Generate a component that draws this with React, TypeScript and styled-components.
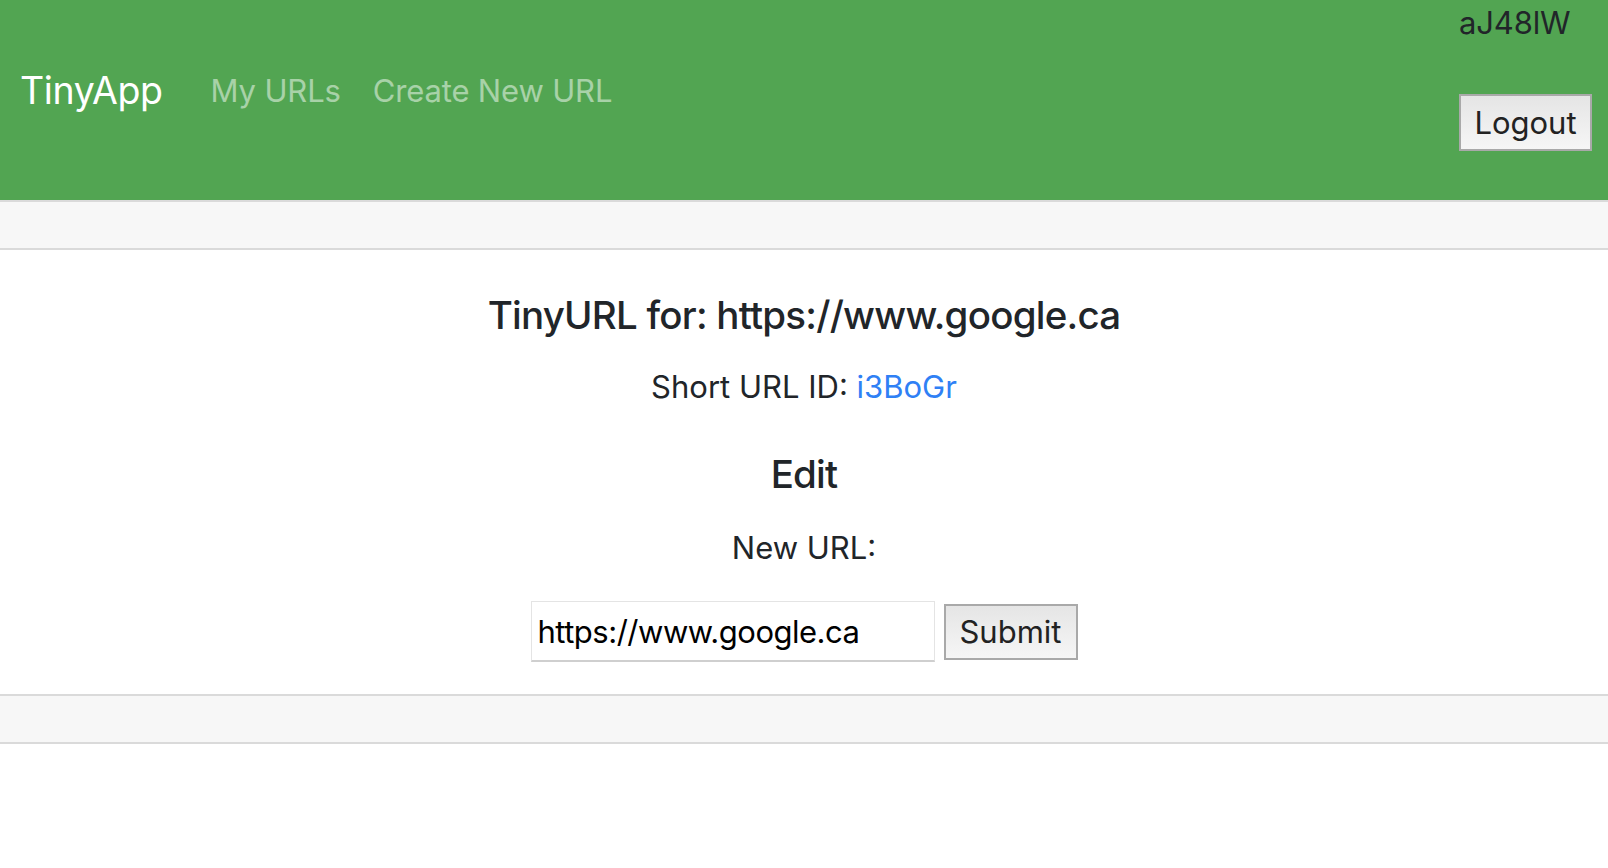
import React from "react";
import styled, { createGlobalStyle } from "styled-components";

const FONT = `Inter, "Liberation Sans", Arial, sans-serif`;

const GlobalStyle = createGlobalStyle`
  html, body { margin: 0; padding: 0; background: #ffffff; }
  body {
    font-family: ${FONT};
    color: #212529;
  }
  * { box-sizing: border-box; }
`;

const Navbar = styled.nav`
  display: flex;
  justify-content: space-between;
  align-items: flex-start;
  height: 200px;
  background: #52a552;
  padding: 0 16px 0 20px;
`;

const NavLeft = styled.div`
  display: flex;
  align-items: center;
  height: 182px;
`;

const Brand = styled.a`
  font-size: 37.5px;
  line-height: 60px;
  letter-spacing: -0.01em;
  color: #ffffff;
  margin-right: 32px;
  text-decoration: none;
`;

const NavLink = styled.a`
  font-size: 31px;
  line-height: 48px;
  letter-spacing: -0.005em;
  padding: 0 16px;
  color: rgba(255, 255, 255, 0.5);
  text-decoration: none;
`;

const NavRight = styled.div`
  display: flex;
  flex-direction: column;
  align-items: flex-start;
`;

const UserId = styled.div`
  font-size: 31px;
  line-height: 46px;
  letter-spacing: -0.005em;
  color: #212529;
`;

const GrayButton = styled.button<{ $w: number; $h: number }>`
  width: ${(p) => p.$w}px;
  height: ${(p) => p.$h}px;
  padding: 0;
  font-family: ${FONT};
  font-size: 31px;
  color: #222;
  background: linear-gradient(#e5e5e5, #f6f6f6);
  border: 2px solid #a9a9a9;
  border-radius: 0;
`;

const LogoutButton = styled(GrayButton)`
  margin-top: 48px;
`;

const Card = styled.section`
  border-top: 2px solid #dadada;
  border-bottom: 2px solid #dadada;
`;

const CardBand = styled.div<{ $top?: boolean }>`
  height: 48px;
  background: #f7f7f7;
  ${(p) =>
    p.$top ? "border-bottom: 2px solid #dadada;" : "border-top: 2px solid #dadada;"}
`;

const CardBody = styled.div`
  padding: 41px 20px 32px;
  display: flex;
  flex-direction: column;
  align-items: center;
  text-align: center;
`;

const Heading = styled.h5<{ $mb: number }>`
  font-size: 38.5px;
  line-height: 48px;
  font-weight: 500;
  letter-spacing: -0.02em;
  margin: 0 0 ${(p) => p.$mb}px;
  color: #212529;
`;

const Para = styled.p<{ $mb: number }>`
  font-size: 31px;
  line-height: 48px;
  margin: 0 0 ${(p) => p.$mb}px;
  color: #212529;
`;

const IdLink = styled.a`
  color: #2f80f5;
  text-decoration: none;
`;

const FormRow = styled.form`
  display: flex;
  align-items: center;
  gap: 9px;
`;

const UrlInput = styled.input`
  width: 404px;
  height: 61px;
  padding: 0 6px;
  font-family: ${FONT};
  font-size: 31px;
  letter-spacing: -0.016em;
  color: #000;
  border: 1px solid #e4e4e4;
  border-bottom: 2px solid #cfcfcf;
  border-radius: 0;
  outline: none;
`;

export default function App() {
  return (
    <>
      <GlobalStyle />
      <Navbar>
        <NavLeft>
          <Brand href="#">TinyApp</Brand>
          <NavLink href="#">My URLs</NavLink>
          <NavLink href="#">Create New URL</NavLink>
        </NavLeft>
        <NavRight>
          <UserId>aJ48lW</UserId>
          <LogoutButton type="button" $w={133} $h={57}>
            Logout
          </LogoutButton>
        </NavRight>
      </Navbar>
      <Card>
        <CardBand $top />
        <CardBody>
          <Heading $mb={24}>TinyURL for: https://www.google.ca</Heading>
          <Para $mb={39}>
            Short URL ID: <IdLink href="#">i3BoGr</IdLink>
          </Para>
          <Heading $mb={26}>Edit</Heading>
          <Para $mb={29}>New URL:</Para>
          <FormRow onSubmit={(e) => e.preventDefault()}>
            <UrlInput type="text" defaultValue="https://www.google.ca" />
            <GrayButton type="submit" $w={134} $h={56}>
              Submit
            </GrayButton>
          </FormRow>
        </CardBody>
        <CardBand />
      </Card>
    </>
  );
}
